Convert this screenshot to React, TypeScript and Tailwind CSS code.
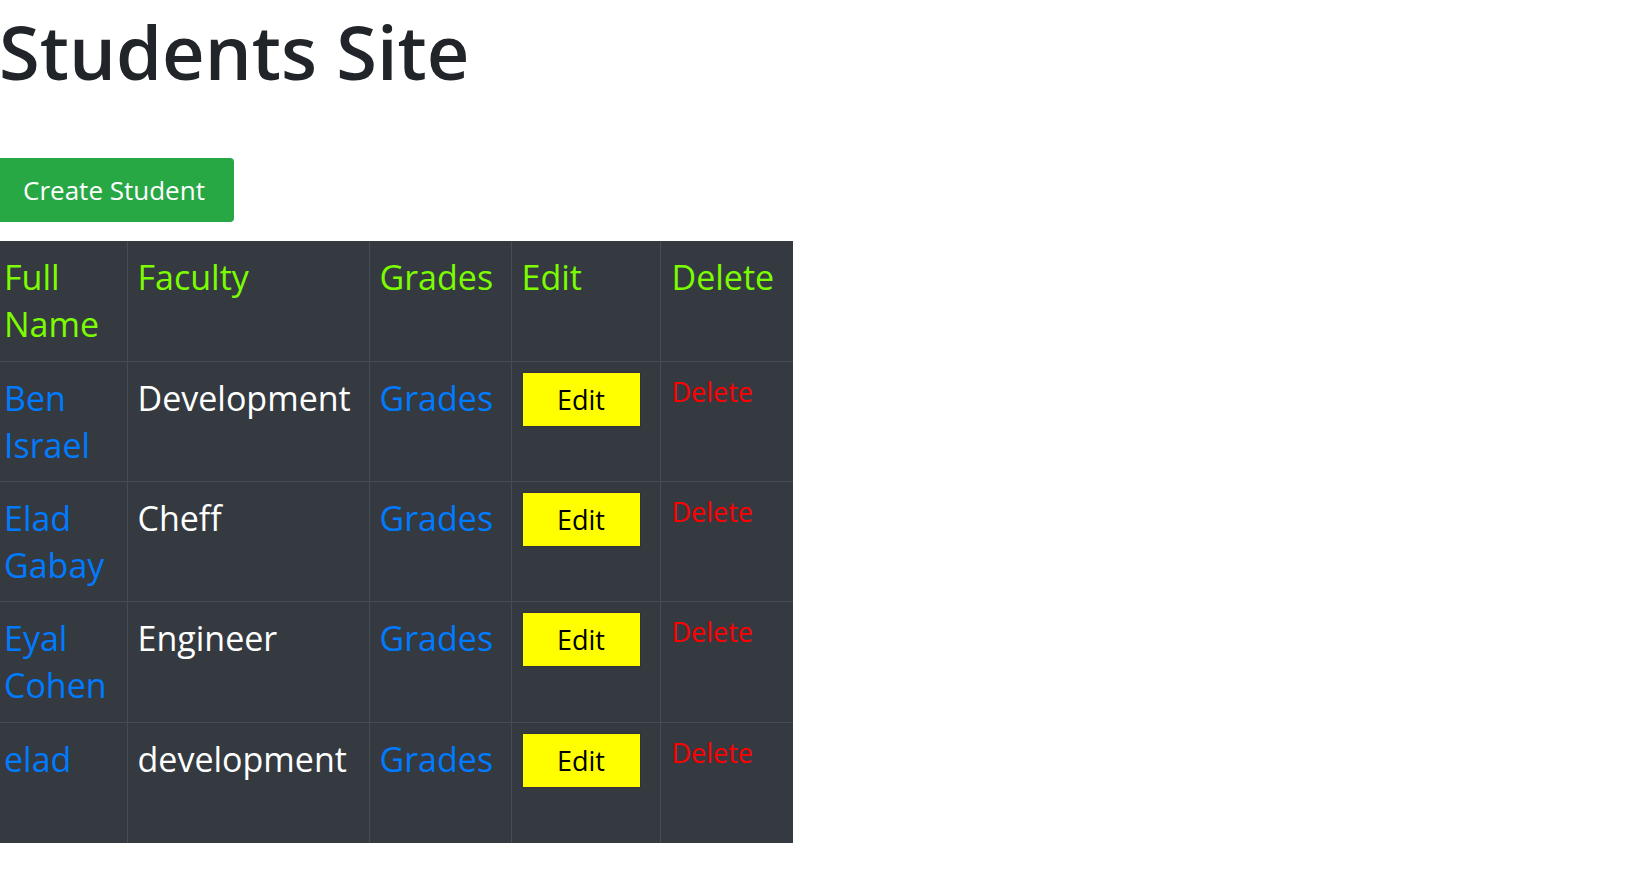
import React from 'react';

type Student = { name: string; faculty: string };

const students: Student[] = [
  { name: 'Ben Israel', faculty: 'Development' },
  { name: 'Elad Gabay', faculty: 'Cheff' },
  { name: 'Eyal Cohen', faculty: 'Engineer' },
  { name: 'elad', faculty: 'development' },
];

const font = { fontFamily: '"Open Sans", "Noto Sans", sans-serif' };

export default function App() {
  return (
    <div className="min-h-screen w-full overflow-hidden bg-white" style={font}>
      <div className="-ml-[7px] flex flex-col items-start">
        <h1 className="mt-[4px] ml-[6px] text-[74px] leading-[96px] font-semibold text-[#212529]">Students Site</h1>
        <button className="mt-[58px] h-[64px] w-[241px] rounded-[4px] bg-[#28a745] pl-[1px] text-[26px] text-white">
          Create Student
        </button>
        <table className="mt-[19px] w-[800px] table-fixed border-collapse bg-[#343a40] text-[34px] leading-[47px]">
          <thead>
            <tr className="h-[120px] align-top text-[#7cfc00]">
              <th className="w-[134px] border-r border-[#454d55] px-[11px] pt-[13px] text-left font-normal">Full Name</th>
              <th className="w-[242px] border-r border-[#454d55] px-[10px] pt-[13px] text-left font-normal">Faculty</th>
              <th className="w-[142px] border-r border-[#454d55] px-[10px] pt-[13px] text-left font-normal">Grades</th>
              <th className="w-[149px] border-r border-[#454d55] px-[10px] pt-[13px] text-left font-normal">Edit</th>
              <th className="w-[133px] px-[11px] pt-[13px] text-left font-normal">Delete</th>
            </tr>
          </thead>
          <tbody>
            {students.map((s) => (
              <tr key={s.name} className="h-[120.4px] border-t border-[#454d55] align-top">
                <td className="border-r border-[#454d55] px-[11px] pt-[13px] text-[#007bff]">{s.name}</td>
                <td className="border-r border-[#454d55] px-[10px] pt-[13px] text-white">{s.faculty}</td>
                <td className="border-r border-[#454d55] px-[10px] pt-[13px] text-[#007bff]">Grades</td>
                <td className="border-r border-[#454d55] px-[10px] pt-[10px]">
                  <button className="h-[55px] w-[119px] border border-[#333] bg-[#ffff00] text-[27px] text-black">Edit</button>
                </td>
                <td className="px-[11px] pt-[6px] text-[27px] text-[#ff0000]">Delete</td>
              </tr>
            ))}
          </tbody>
        </table>
      </div>
    </div>
  );
}
